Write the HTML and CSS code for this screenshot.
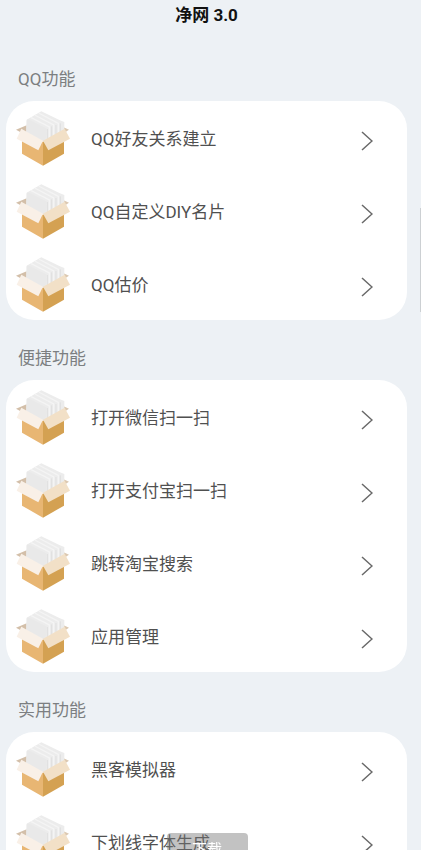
FILE: index.html
```html
<!DOCTYPE html>
<html lang="zh-CN">

<head>
  <meta charset="UTF-8" />
  <meta name="viewport" content="width=device-width, initial-scale=1.0" />
  <title>净网 3.0</title>
  <link rel="stylesheet" href="styles.css">
</head>

<body>
  <!-- Shared icons -->
  <svg class="sprite" aria-hidden="true">
    <symbol id="box" viewBox="18 18 162 165">
      <path d="M18 74 L50 61 L50 84 L36 84 Z" fill="#d3bfa9" />
      <path d="M177 74 L148 61 L148 84 L162 84 Z" fill="#dcc8b1" />
      <path d="M50 44 L94 19 L148 45 L163 51 V92 L111 112 L50 92 Z" fill="#ececec" />
      <path d="M62 37 L118 66 V104 M74 30 L131 60 V100 M86 24 L145 55 V96" fill="none" stroke="#f4f4f4" stroke-width="4" />
      <path d="M112 72 V110 M125 64 V104 M138 60 V100 M151 55 V96" fill="none" stroke="#dfdfdf" stroke-width="3" />
      <path d="M50 46 L55 43 L111 71 L106 112 L48 92 Z" fill="#e9e9e9" />
      <path d="M36 99 L99 110 L99 182 L36 146 Z" fill="#e8b673" />
      <path d="M162 99 L99 110 L99 182 L162 146 Z" fill="#d4a152" />
      <path d="M34 71 L99 107 L85 136 L20 101 Z" fill="#f9f0e7" />
      <path d="M164 71 L99 107 L115 136 L180 101 Z" fill="#f2e0c7" />
    </symbol>
    <symbol id="arrow" viewBox="0 0 12 20">
      <path d="M1 1 L11 10 L1 19" fill="none" stroke="#696969" stroke-width="1.5" />
    </symbol>
  </svg>

  <main class="page">
    <h1 class="page-title">净网 3.0</h1>

    <section>
      <h2 class="group-title">QQ功能</h2>
      <div class="card">
        <a class="item" href="#"><svg class="item-icon"><use href="#box" /></svg><span class="item-name">QQ好友关系建立</span><svg class="item-arrow"><use href="#arrow" /></svg></a>
        <a class="item" href="#"><svg class="item-icon"><use href="#box" /></svg><span class="item-name">QQ自定义DIY名片</span><svg class="item-arrow"><use href="#arrow" /></svg></a>
        <a class="item" href="#"><svg class="item-icon"><use href="#box" /></svg><span class="item-name">QQ估价</span><svg class="item-arrow"><use href="#arrow" /></svg></a>
      </div>
    </section>

    <section>
      <h2 class="group-title">便捷功能</h2>
      <div class="card">
        <a class="item" href="#"><svg class="item-icon"><use href="#box" /></svg><span class="item-name">打开微信扫一扫</span><svg class="item-arrow"><use href="#arrow" /></svg></a>
        <a class="item" href="#"><svg class="item-icon"><use href="#box" /></svg><span class="item-name">打开支付宝扫一扫</span><svg class="item-arrow"><use href="#arrow" /></svg></a>
        <a class="item" href="#"><svg class="item-icon"><use href="#box" /></svg><span class="item-name">跳转淘宝搜索</span><svg class="item-arrow"><use href="#arrow" /></svg></a>
        <a class="item" href="#"><svg class="item-icon"><use href="#box" /></svg><span class="item-name">应用管理</span><svg class="item-arrow"><use href="#arrow" /></svg></a>
      </div>
    </section>

    <section>
      <h2 class="group-title">实用功能</h2>
      <div class="card">
        <a class="item" href="#"><svg class="item-icon"><use href="#box" /></svg><span class="item-name">黑客模拟器</span><svg class="item-arrow"><use href="#arrow" /></svg></a>
        <a class="item" href="#"><svg class="item-icon"><use href="#box" /></svg><span class="item-name">下划线字体生成</span><svg class="item-arrow"><use href="#arrow" /></svg></a>
      </div>
    </section>
  </main>

  <div class="scroll-thumb"></div>
  <div class="toast" role="status">下载</div>
</body>

</html>
```
FILE: styles.css
```css
/* General Styles */
* {
  box-sizing: border-box;
}

body {
  margin: 0;
  height: 100vh;
  overflow: hidden;
  background: #edf1f5;
  font-family: Roboto, "Noto Sans CJK SC", sans-serif;
  font-size: 17px;
  line-height: 24px;
}

.sprite {
  position: absolute;
  width: 0;
  height: 0;
}

.page {
  height: 100%;
  padding: 3px 14px 0 6px;
  overflow-y: auto;
  scrollbar-width: none;
}

.page-title {
  margin: 0 0 14px;
  font-size: 17px;
  font-weight: bold;
  text-align: center;
  color: #111;
}

.group-title {
  margin: 0;
  padding: 26px 12px 10px;
  font-size: 17px;
  font-weight: normal;
  color: #7c7f81;
}

/* Cards */
.card {
  background: #fff;
  border-radius: 28px;
}

.item {
  display: flex;
  align-items: center;
  height: 73px;
  padding: 2px 34px 0 10px;
  color: #505050;
  text-decoration: none;
}

.item-icon {
  width: 54px;
  height: 55px;
  margin-right: 21px;
}

.item-name {
  flex: 1;
}

.item-arrow {
  width: 12px;
  height: 20px;
  margin-top: 4px;
}

/* Overlays */
.scroll-thumb {
  position: fixed;
  top: 208px;
  right: 0;
  width: 1px;
  height: 104px;
  background: #ccd0d3;
}

.toast {
  position: fixed;
  bottom: -20px;
  left: 50%;
  width: 81px;
  height: 37px;
  margin-left: -44px;
  padding-top: 5px;
  border-radius: 4px;
  background: rgba(120, 120, 120, 0.45);
  color: #fff;
  font-size: 15px;
  text-align: center;
}
```
